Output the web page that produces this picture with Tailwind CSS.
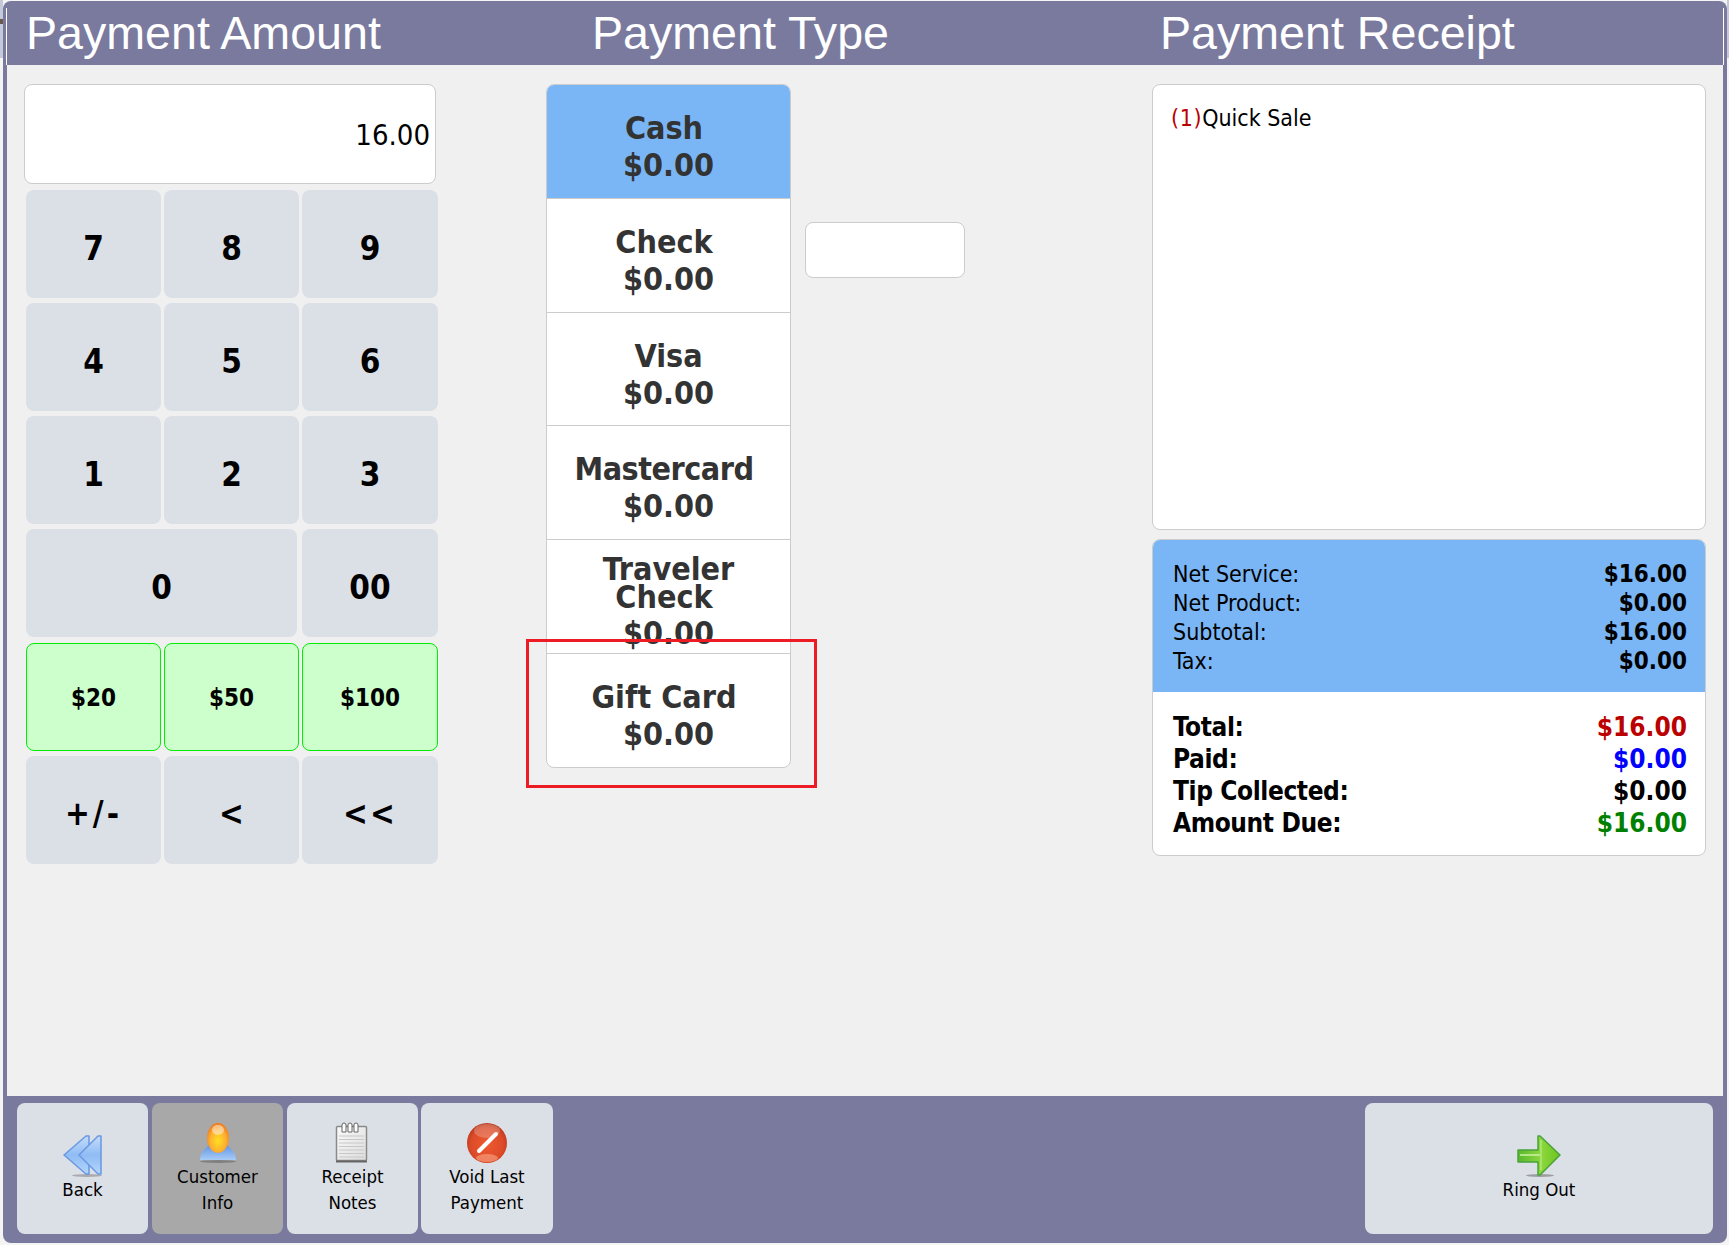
<!DOCTYPE html>
<html lang="en">
<head>
    <meta charset="UTF-8">
    <title>Payment</title>
    <script src="https://cdn.jsdelivr.net/npm/@tailwindcss/browser@4"></script>
</head>
<body class="relative bg-[#f4f4f4] w-[1729px] h-[1245px] overflow-hidden font-['DejaVu_Sans_Condensed','DejaVu_Sans',sans-serif]">
    <!-- strips of the desktop behind the window -->
    <div class="absolute left-0 top-0 w-[3px] h-[58px] bg-[#c4c9da]"><div class="mt-[19px] h-[5px] bg-[#6b5a4a]"></div></div>
    <div class="absolute right-0 top-0 w-[2px] h-[58px] bg-[#c4c9da]"></div>

    <div class="relative ml-[3px] mt-[1px] w-[1724px] h-[1242px] bg-[#7a7a9e] rounded-lg pl-[4px] pr-[4px] flex flex-col">

        <!-- titles -->
        <div class="h-[64px] shrink-0 -mx-px px-px relative flex font-['Liberation_Sans',sans-serif] text-[46.6px] leading-[64px] text-white">
            <div class="absolute left-0 top-[7px] bottom-0 w-px bg-white"></div>
            <div class="absolute right-0 top-[7px] bottom-0 w-px bg-white"></div>
            <div class="w-[585px] pl-[19px]">Payment Amount</div>
            <div class="w-[568px]">Payment Type</div>
            <div>Payment Receipt</div>
        </div>

        <!-- body -->
        <div class="flex-1 bg-[#f0f0f0] flex pt-[19px]">
            <!-- keypad -->
            <div class="w-[539px] shrink-0 pl-[17px]">
                <div class="w-[412px] h-[100px] bg-white border border-[#cccccc] rounded-lg flex items-center justify-end pr-[5px] pt-[4px] text-[29px] text-black">16.00</div>
                <div class="grid grid-cols-[135px_135px_136px] grid-rows-[108px_108px_108px_108px_109px_108px] gap-x-[3px] gap-y-[5px] mt-[6px] ml-[2px] w-[412px] text-[33px] font-bold text-black">
                    <button class="bg-[#dbdfe6] rounded-lg pt-[10px]">7</button>
                    <button class="bg-[#dbdfe6] rounded-lg pt-[10px]">8</button>
                    <button class="bg-[#dbdfe6] rounded-lg pt-[10px]">9</button>
                    <button class="bg-[#dbdfe6] rounded-lg pt-[10px]">4</button>
                    <button class="bg-[#dbdfe6] rounded-lg pt-[10px]">5</button>
                    <button class="bg-[#dbdfe6] rounded-lg pt-[10px]">6</button>
                    <button class="bg-[#dbdfe6] rounded-lg pt-[10px]">1</button>
                    <button class="bg-[#dbdfe6] rounded-lg pt-[10px]">2</button>
                    <button class="bg-[#dbdfe6] rounded-lg pt-[10px]">3</button>
                    <button class="col-span-2 w-[271px] bg-[#dbdfe6] rounded-lg pt-[10px]">0</button>
                    <button class="bg-[#dbdfe6] rounded-lg pt-[10px]">00</button>
                    <button class="self-end h-[108px] bg-[#ccffcc] border border-[#00ee00] rounded-lg text-[24px] pt-[2px]">$20</button>
                    <button class="self-end h-[108px] bg-[#ccffcc] border border-[#00ee00] rounded-lg text-[24px] pt-[2px]">$50</button>
                    <button class="self-end h-[108px] bg-[#ccffcc] border border-[#00ee00] rounded-lg text-[24px] pt-[2px]">$100</button>
                    <button class="bg-[#dbdfe6] rounded-lg pt-[8px] tracking-[3px]">+/-</button>
                    <button class="bg-[#dbdfe6] rounded-lg pt-[8px]">&lt;</button>
                    <button class="bg-[#dbdfe6] rounded-lg pt-[8px] tracking-[2px]">&lt;&lt;</button>
                </div>
            </div>

            <!-- payment types -->
            <div class="relative w-[245px] shrink-0 self-start text-[32px] leading-[37px] font-bold text-[#333333] text-center">
                <div class="border border-[#cccccc] rounded-lg overflow-hidden bg-white">
                    <div class="h-[114px] bg-[#7ab6f5] border-b border-[#cccccc] pt-[25px]"><div class="pr-[9px]">Cash</div><div>$0.00</div></div>
                    <div class="h-[114px] border-b border-[#cccccc] pt-[25px]"><div class="pr-[9px]">Check</div><div>$0.00</div></div>
                    <div class="h-[113px] border-b border-[#cccccc] pt-[25px]"><div>Visa</div><div>$0.00</div></div>
                    <div class="h-[114px] border-b border-[#cccccc] pt-[25px]"><div class="pr-[9px] tracking-[-0.5px]">Mastercard</div><div>$0.00</div></div>
                    <div class="h-[114px] border-b border-[#cccccc] pt-[15px]"><div class="leading-[28px]">Traveler</div><div class="leading-[28px] pr-[9px]">Check</div><div class="mt-[4px]">$0.00</div></div>
                    <div class="h-[113px] pt-[25px]"><div class="pr-[9px]">Gift Card</div><div>$0.00</div></div>
                </div>
                <!-- highlight -->
                <div class="absolute left-[-20px] top-[555px] w-[291px] h-[149px] border-[3px] border-[#ed1c24]"></div>
            </div>

            <!-- small input -->
            <div class="w-[361px] shrink-0 pl-[14px] pt-[138px]">
                <div class="w-[160px] h-[56px] bg-white border border-[#cccccc] rounded-lg"></div>
            </div>

            <!-- receipt -->
            <div class="w-[554px] shrink-0">
                <div class="h-[446px] bg-white border border-[#cccccc] rounded-lg pl-[18px] pt-[17px] text-[23px] leading-[32px] text-black"><span class="text-[#bb0000] tracking-[0.6px]">(1)</span>Quick Sale</div>
                <div class="mt-[9px] border border-[#cccccc] rounded-lg overflow-hidden bg-white">
                    <div class="h-[152px] bg-[#7ab6f5] pl-[20px] pr-[18px] pt-[20px] text-[23px] leading-[29px] text-black">
                        <div class="flex justify-between"><span>Net Service:</span><b class="text-[24px]">$16.00</b></div>
                        <div class="flex justify-between"><span>Net Product:</span><b class="text-[24px]">$0.00</b></div>
                        <div class="flex justify-between"><span>Subtotal:</span><b class="text-[24px]">$16.00</b></div>
                        <div class="flex justify-between"><span>Tax:</span><b class="text-[24px]">$0.00</b></div>
                    </div>
                    <div class="h-[163px] pl-[20px] pr-[18px] pt-[19px] text-[26px] leading-[32px] font-bold text-black">
                        <div class="flex justify-between"><span class="tracking-[-0.4px]">Total:</span><span class="text-[#bb0000]">$16.00</span></div>
                        <div class="flex justify-between"><span class="tracking-[-0.4px]">Paid:</span><span class="text-[#0000ff]">$0.00</span></div>
                        <div class="flex justify-between"><span class="tracking-[-0.4px]">Tip Collected:</span><span>$0.00</span></div>
                        <div class="flex justify-between"><span class="tracking-[-0.4px]">Amount Due:</span><span class="text-[#008000]">$16.00</span></div>
                    </div>
                </div>
            </div>
        </div>

        <!-- footer -->
        <div class="h-[147px] shrink-0 flex items-start pt-[7px] pl-[10px] pr-[10px] gap-[4px] text-[18.5px] leading-[26px] text-black text-center">
            <button class="w-[131px] h-[131px] bg-[#dbdfe6] rounded-lg flex flex-col items-center justify-center">
                <svg width="40" height="42" viewBox="0 0 40 42">
                    <defs>
                        <linearGradient id="backFill" x1="0" y1="0" x2="0" y2="1"><stop offset="0" stop-color="#c4dcfa"/><stop offset="0.5" stop-color="#8fbcf4"/><stop offset="1" stop-color="#b4d6fb"/></linearGradient>
                    </defs>
                    <ellipse cx="24" cy="40.5" rx="15" ry="1.5" fill="#777777" opacity="0.5"/>
                    <path d="M1 20 23 1h3v38h-3z" fill="url(#backFill)" stroke="#6b97e4" stroke-width="1.5" stroke-linejoin="round"/>
                    <path d="M16 20 35 1h3v38h-3z" fill="url(#backFill)" stroke="#6b97e4" stroke-width="1.5" stroke-linejoin="round"/>
                </svg>
                <span>Back</span>
            </button>
            <button class="w-[131px] h-[131px] bg-[#a8a8a8] rounded-lg flex flex-col items-center justify-center">
                <svg width="40" height="42" viewBox="0 0 40 42">
                    <defs>
                        <radialGradient id="headFill" cx="0.5" cy="0.6" r="0.6"><stop offset="0" stop-color="#ffe020"/><stop offset="0.6" stop-color="#fdb030"/><stop offset="1" stop-color="#ee7a20"/></radialGradient>
                        <linearGradient id="bodyFill" x1="0" y1="0" x2="0" y2="1"><stop offset="0" stop-color="#5a90e4"/><stop offset="1" stop-color="#a8ccf6"/></linearGradient>
                    </defs>
                    <ellipse cx="20" cy="39.5" rx="18" ry="1.5" fill="#666666" opacity="0.6"/>
                    <path d="M2 38c0-3 1-7 4-10l6-6h16l6 6c3 3 4 7 4 10z" fill="url(#bodyFill)"/>
                    <ellipse cx="20" cy="16" rx="11" ry="15" fill="url(#headFill)"/>
                    <ellipse cx="20" cy="8" rx="6" ry="5" fill="#ffffff" opacity="0.45"/>
                </svg>
                <span>Customer<br>Info</span>
            </button>
            <button class="w-[131px] h-[131px] bg-[#dbdfe6] rounded-lg flex flex-col items-center justify-center">
                <svg width="40" height="42" viewBox="0 0 40 42">
                    <defs>
                        <linearGradient id="paperFill" x1="0" y1="0" x2="1" y2="1"><stop offset="0" stop-color="#fafafa"/><stop offset="1" stop-color="#dcdcdc"/></linearGradient>
                    </defs>
                    <rect x="3.5" y="4.5" width="30" height="34" rx="1" fill="url(#paperFill)" stroke="#8a8a8a" stroke-width="1.5"/>
                    <path d="M6 14h25M6 17.5h25M6 21h25M6 24.5h25M6 28h25M6 31.5h25M6 35h25" stroke="#c8c8c8"/>
                    <path d="M3 39.5h31" stroke="#666666" stroke-width="2"/>
                    <path d="M9 10V3a2 2 0 0 1 4 0v7zM15 10V3a2 2 0 0 1 4 0v7zM21 10V3a2 2 0 0 1 4 0v7z" fill="#ffffff" stroke="#666666"/>
                </svg>
                <span>Receipt<br>Notes</span>
            </button>
            <button class="-ml-px w-[132px] h-[131px] bg-[#dbdfe6] rounded-lg flex flex-col items-center justify-center">
                <svg width="42" height="42" viewBox="0 0 42 42">
                    <defs>
                        <radialGradient id="voidFill" cx="0.5" cy="0.55" r="0.55"><stop offset="0" stop-color="#ee5a30"/><stop offset="0.75" stop-color="#dc4a28"/><stop offset="1" stop-color="#b83a20"/></radialGradient>
                    </defs>
                    <circle cx="21" cy="21" r="20" fill="url(#voidFill)"/>
                    <ellipse cx="21" cy="9" rx="13" ry="7" fill="#ffffff" opacity="0.22"/>
                    <ellipse cx="21" cy="36" rx="11" ry="4" fill="#ffb090" opacity="0.55"/>
                    <path d="M13 29 30 12" stroke="#ffffff" stroke-width="4" stroke-linecap="round"/>
                </svg>
                <span>Void Last<br>Payment</span>
            </button>
            <button class="ml-auto w-[348px] h-[131px] bg-[#dbdfe6] rounded-lg flex flex-col items-center justify-center">
                <svg width="44" height="42" viewBox="0 0 44 42">
                    <defs>
                        <linearGradient id="ringFill" x1="0" y1="0" x2="1" y2="0"><stop offset="0" stop-color="#57b82e"/><stop offset="0.55" stop-color="#8dd83e"/><stop offset="1" stop-color="#6cc420"/></linearGradient>
                    </defs>
                    <ellipse cx="23" cy="40.5" rx="14" ry="1.5" fill="#666666" opacity="0.55"/>
                    <path d="M1 15h20V1h2l20 19-20 20h-2V27H1z" fill="url(#ringFill)" stroke="#4aa23a" stroke-width="1.5" stroke-linejoin="round"/>
                    <path d="M3 20h20" stroke="#c8f0a0" stroke-width="2" opacity="0.8"/>
                    <path d="M24 5v30" stroke="#c8f0a0" stroke-width="1.5" opacity="0.6"/>
                </svg>
                <span>Ring Out</span>
            </button>
        </div>
    </div>
</body>
</html>
